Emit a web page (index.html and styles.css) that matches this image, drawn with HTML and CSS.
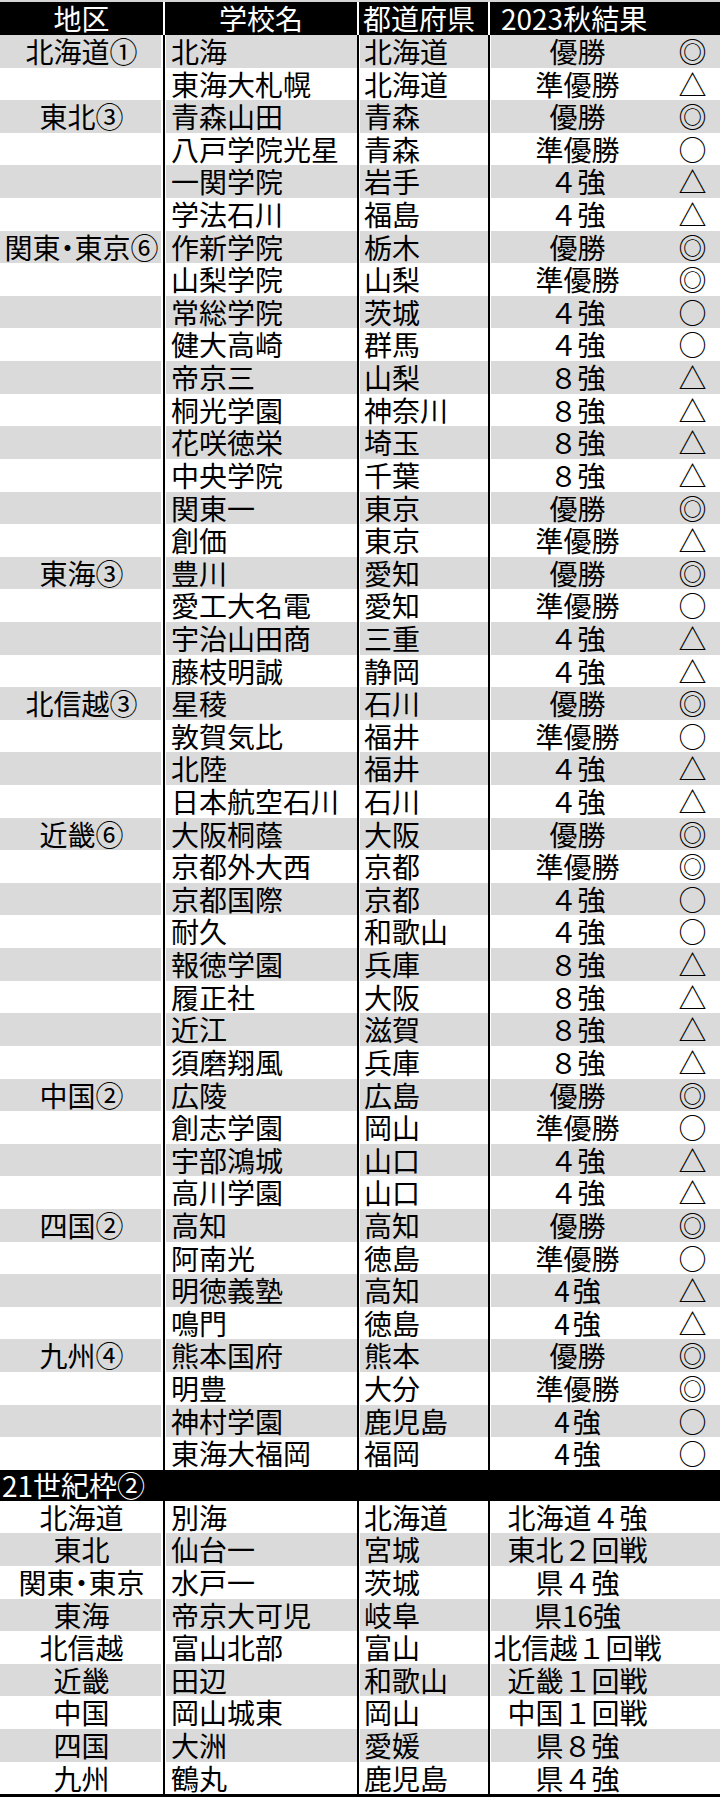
FILE: index.html
```html
<!DOCTYPE html>
<html lang="ja">
<head>
<meta charset="utf-8">
<title>選抜出場校一覧</title>
<link rel="stylesheet" href="styles.css">
</head>
<body>
<div class="sheet">
  <div class="row head">
    <div class="c c1">地区</div><div class="c c2 mid">学校名</div><div class="c c3">都道府県</div><div class="c c45">2023秋結果</div>
  </div>

  <div class="row g"><div class="c c1">北海道①</div><div class="c c2">北海</div><div class="c c3">北海道</div><div class="c c4">優勝</div><div class="c c5">◎</div></div>
  <div class="row"><div class="c c1"></div><div class="c c2">東海大札幌</div><div class="c c3">北海道</div><div class="c c4">準優勝</div><div class="c c5">△</div></div>
  <div class="row g"><div class="c c1">東北③</div><div class="c c2">青森山田</div><div class="c c3">青森</div><div class="c c4">優勝</div><div class="c c5">◎</div></div>
  <div class="row"><div class="c c1"></div><div class="c c2">八戸学院光星</div><div class="c c3">青森</div><div class="c c4">準優勝</div><div class="c c5">○</div></div>
  <div class="row g"><div class="c c1"></div><div class="c c2">一関学院</div><div class="c c3">岩手</div><div class="c c4">４強</div><div class="c c5">△</div></div>
  <div class="row"><div class="c c1"></div><div class="c c2">学法石川</div><div class="c c3">福島</div><div class="c c4">４強</div><div class="c c5">△</div></div>
  <div class="row g"><div class="c c1 half">関東・東京⑥</div><div class="c c2">作新学院</div><div class="c c3">栃木</div><div class="c c4">優勝</div><div class="c c5">◎</div></div>
  <div class="row"><div class="c c1"></div><div class="c c2">山梨学院</div><div class="c c3">山梨</div><div class="c c4">準優勝</div><div class="c c5">◎</div></div>
  <div class="row g"><div class="c c1"></div><div class="c c2">常総学院</div><div class="c c3">茨城</div><div class="c c4">４強</div><div class="c c5">○</div></div>
  <div class="row"><div class="c c1"></div><div class="c c2">健大高崎</div><div class="c c3">群馬</div><div class="c c4">４強</div><div class="c c5">○</div></div>
  <div class="row g"><div class="c c1"></div><div class="c c2">帝京三</div><div class="c c3">山梨</div><div class="c c4">８強</div><div class="c c5">△</div></div>
  <div class="row"><div class="c c1"></div><div class="c c2">桐光学園</div><div class="c c3">神奈川</div><div class="c c4">８強</div><div class="c c5">△</div></div>
  <div class="row g"><div class="c c1"></div><div class="c c2">花咲徳栄</div><div class="c c3">埼玉</div><div class="c c4">８強</div><div class="c c5">△</div></div>
  <div class="row"><div class="c c1"></div><div class="c c2">中央学院</div><div class="c c3">千葉</div><div class="c c4">８強</div><div class="c c5">△</div></div>
  <div class="row g"><div class="c c1"></div><div class="c c2">関東一</div><div class="c c3">東京</div><div class="c c4">優勝</div><div class="c c5">◎</div></div>
  <div class="row"><div class="c c1"></div><div class="c c2">創価</div><div class="c c3">東京</div><div class="c c4">準優勝</div><div class="c c5">△</div></div>
  <div class="row g"><div class="c c1">東海③</div><div class="c c2">豊川</div><div class="c c3">愛知</div><div class="c c4">優勝</div><div class="c c5">◎</div></div>
  <div class="row"><div class="c c1"></div><div class="c c2">愛工大名電</div><div class="c c3">愛知</div><div class="c c4">準優勝</div><div class="c c5">○</div></div>
  <div class="row g"><div class="c c1"></div><div class="c c2">宇治山田商</div><div class="c c3">三重</div><div class="c c4">４強</div><div class="c c5">△</div></div>
  <div class="row"><div class="c c1"></div><div class="c c2">藤枝明誠</div><div class="c c3">静岡</div><div class="c c4">４強</div><div class="c c5">△</div></div>
  <div class="row g"><div class="c c1">北信越③</div><div class="c c2">星稜</div><div class="c c3">石川</div><div class="c c4">優勝</div><div class="c c5">◎</div></div>
  <div class="row"><div class="c c1"></div><div class="c c2">敦賀気比</div><div class="c c3">福井</div><div class="c c4">準優勝</div><div class="c c5">○</div></div>
  <div class="row g"><div class="c c1"></div><div class="c c2">北陸</div><div class="c c3">福井</div><div class="c c4">４強</div><div class="c c5">△</div></div>
  <div class="row"><div class="c c1"></div><div class="c c2">日本航空石川</div><div class="c c3">石川</div><div class="c c4">４強</div><div class="c c5">△</div></div>
  <div class="row g"><div class="c c1">近畿⑥</div><div class="c c2">大阪桐蔭</div><div class="c c3">大阪</div><div class="c c4">優勝</div><div class="c c5">◎</div></div>
  <div class="row"><div class="c c1"></div><div class="c c2">京都外大西</div><div class="c c3">京都</div><div class="c c4">準優勝</div><div class="c c5">◎</div></div>
  <div class="row g"><div class="c c1"></div><div class="c c2">京都国際</div><div class="c c3">京都</div><div class="c c4">４強</div><div class="c c5">○</div></div>
  <div class="row"><div class="c c1"></div><div class="c c2">耐久</div><div class="c c3">和歌山</div><div class="c c4">４強</div><div class="c c5">○</div></div>
  <div class="row g"><div class="c c1"></div><div class="c c2">報徳学園</div><div class="c c3">兵庫</div><div class="c c4">８強</div><div class="c c5">△</div></div>
  <div class="row"><div class="c c1"></div><div class="c c2">履正社</div><div class="c c3">大阪</div><div class="c c4">８強</div><div class="c c5">△</div></div>
  <div class="row g"><div class="c c1"></div><div class="c c2">近江</div><div class="c c3">滋賀</div><div class="c c4">８強</div><div class="c c5">△</div></div>
  <div class="row"><div class="c c1"></div><div class="c c2">須磨翔風</div><div class="c c3">兵庫</div><div class="c c4">８強</div><div class="c c5">△</div></div>
  <div class="row g"><div class="c c1">中国②</div><div class="c c2">広陵</div><div class="c c3">広島</div><div class="c c4">優勝</div><div class="c c5">◎</div></div>
  <div class="row"><div class="c c1"></div><div class="c c2">創志学園</div><div class="c c3">岡山</div><div class="c c4">準優勝</div><div class="c c5">○</div></div>
  <div class="row g"><div class="c c1"></div><div class="c c2">宇部鴻城</div><div class="c c3">山口</div><div class="c c4">４強</div><div class="c c5">△</div></div>
  <div class="row"><div class="c c1"></div><div class="c c2">高川学園</div><div class="c c3">山口</div><div class="c c4">４強</div><div class="c c5">△</div></div>
  <div class="row g"><div class="c c1">四国②</div><div class="c c2">高知</div><div class="c c3">高知</div><div class="c c4">優勝</div><div class="c c5">◎</div></div>
  <div class="row"><div class="c c1"></div><div class="c c2">阿南光</div><div class="c c3">徳島</div><div class="c c4">準優勝</div><div class="c c5">○</div></div>
  <div class="row g"><div class="c c1"></div><div class="c c2">明徳義塾</div><div class="c c3">高知</div><div class="c c4 wide">4強</div><div class="c c5">△</div></div>
  <div class="row"><div class="c c1"></div><div class="c c2">鳴門</div><div class="c c3">徳島</div><div class="c c4 wide">4強</div><div class="c c5">△</div></div>
  <div class="row g"><div class="c c1">九州④</div><div class="c c2">熊本国府</div><div class="c c3">熊本</div><div class="c c4">優勝</div><div class="c c5">◎</div></div>
  <div class="row"><div class="c c1"></div><div class="c c2">明豊</div><div class="c c3">大分</div><div class="c c4">準優勝</div><div class="c c5">◎</div></div>
  <div class="row g"><div class="c c1"></div><div class="c c2">神村学園</div><div class="c c3">鹿児島</div><div class="c c4 wide">4強</div><div class="c c5">○</div></div>
  <div class="row"><div class="c c1"></div><div class="c c2">東海大福岡</div><div class="c c3">福岡</div><div class="c c4 wide">4強</div><div class="c c5">○</div></div>

  <div class="row band"><div class="c call">21世紀枠②</div></div>

  <div class="row"><div class="c c1">北海道</div><div class="c c2">別海</div><div class="c c3">北海道</div><div class="c c4">北海道４強</div><div class="c c5"></div></div>
  <div class="row g"><div class="c c1">東北</div><div class="c c2">仙台一</div><div class="c c3">宮城</div><div class="c c4">東北２回戦</div><div class="c c5"></div></div>
  <div class="row"><div class="c c1 half">関東・東京</div><div class="c c2">水戸一</div><div class="c c3">茨城</div><div class="c c4">県４強</div><div class="c c5"></div></div>
  <div class="row g"><div class="c c1">東海</div><div class="c c2">帝京大可児</div><div class="c c3">岐阜</div><div class="c c4">県16強</div><div class="c c5"></div></div>
  <div class="row"><div class="c c1">北信越</div><div class="c c2">富山北部</div><div class="c c3">富山</div><div class="c c4">北信越１回戦</div><div class="c c5"></div></div>
  <div class="row g"><div class="c c1">近畿</div><div class="c c2">田辺</div><div class="c c3">和歌山</div><div class="c c4">近畿１回戦</div><div class="c c5"></div></div>
  <div class="row"><div class="c c1">中国</div><div class="c c2">岡山城東</div><div class="c c3">岡山</div><div class="c c4">中国１回戦</div><div class="c c5"></div></div>
  <div class="row g"><div class="c c1">四国</div><div class="c c2">大洲</div><div class="c c3">愛媛</div><div class="c c4">県８強</div><div class="c c5"></div></div>
  <div class="row"><div class="c c1">九州</div><div class="c c2">鶴丸</div><div class="c c3">鹿児島</div><div class="c c4">県４強</div><div class="c c5"></div></div>
</div>
</body>
</html>
```

FILE: styles.css
```css
html, body {
  margin: 0;
  padding: 0;
  background: #fff;
}

body {
  font-family: "Noto Sans CJK JP", "Noto Sans", sans-serif;
  font-size: 28px;
  color: #000;
}

.sheet {
  width: 720px;
  border-top: 2px solid #d6d6d6;
  border-bottom: 3px solid #000;
}

.row {
  display: grid;
  grid-template-columns: 163px 194px 131px 177px 55px;
  height: 32.61px;
  line-height: 32.61px;
  white-space: nowrap;
}

.c {
  box-sizing: border-box;
  overflow: visible;
}

.c1 {
  text-align: center;
}

.c2 {
  border-left: 2px solid #000;
  padding-left: 6px;
}

.c3 {
  border-left: 2px solid #000;
  padding-left: 5px;
}

.c4 {
  border-left: 2px solid #000;
  text-align: center;
}

.c5 {
  text-align: center;
}

/* half-width middle dot, as in the reference */
.half {
  font-feature-settings: "halt";
}

/* slightly looser digit + kanji pairs */
.wide {
  letter-spacing: 3px;
  text-indent: 3px;
}

.g .c {
  background: #dadada;
}

.g .c1 {
  box-shadow: inset -2px 0 0 #fff;
}

.g .c2,
.g .c3,
.g .c4 {
  box-shadow: inset 1px 0 0 #fff;
}

/* header */
.head {
  height: 33px;
  line-height: 33px;
  background: #000;
  color: #fff;
}

.head .c2,
.head .c3,
.head .c45 {
  border-left: 2px solid #fff;
}

.head .c3 {
  padding-left: 4px;
}

.mid {
  text-align: center;
  padding-left: 0;
}

.c45 {
  grid-column: span 2;
  padding-left: 11px;
  box-sizing: border-box;
}

/* 21世紀枠 band */
.band {
  height: 31px;
  line-height: 31px;
  background: #000;
  color: #fff;
}

.call {
  grid-column: 1 / -1;
  padding-left: 2px;
}
```
